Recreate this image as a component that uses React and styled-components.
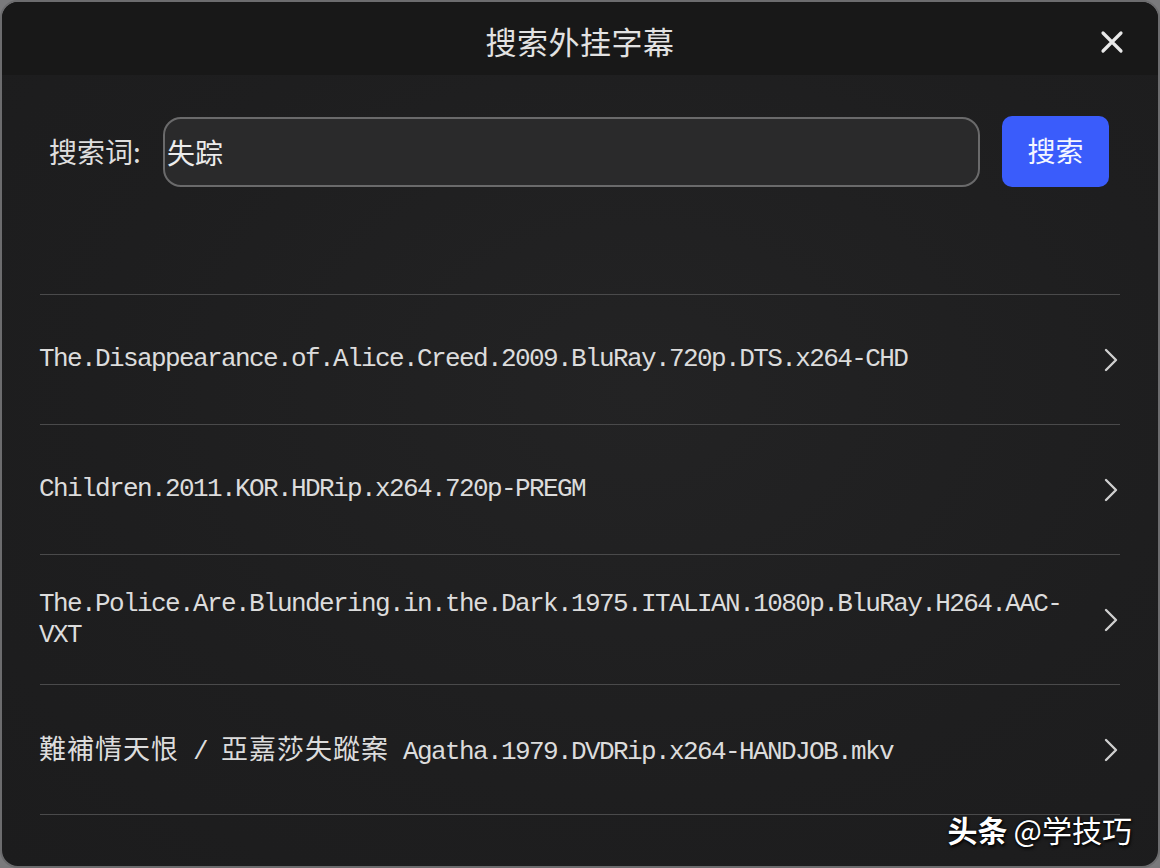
import React from "react";
import styled, { createGlobalStyle } from "styled-components";

const Global = createGlobalStyle`
  html, body { margin: 0; padding: 0; background: #7a7a7c; }
  body { font-family: "Noto Sans CJK SC", "Noto Sans", sans-serif; }
  * { box-sizing: border-box; }
`;

const Dialog = styled.div`
  position: relative;
  width: 1160px;
  height: 868px;
  border: 2px solid #6c6c6e;
  border-radius: 18px;
  overflow: hidden;
  background: radial-gradient(ellipse at 55% 45%, #232324 0%, #1e1e1f 60%, #1c1c1d 100%);
  display: flex;
  flex-direction: column;
`;

const Header = styled.div`
  height: 73px;
  flex: none;
  background: #181818;
  display: grid;
  grid-template-columns: 1fr auto 1fr;
  align-items: center;
  padding-right: 34px;
  padding-left: 34px;
`;

const Title = styled.div`
  grid-column: 2;
  font-size: 31px;
  color: #e2e2e2;
  letter-spacing: 0.5px;
  line-height: 1;
  padding-top: 4px;
`;

const CloseButton = styled.button`
  grid-column: 3;
  justify-self: end;
  background: none;
  border: none;
  padding: 0;
  width: 24px;
  height: 24px;
  display: flex;
  cursor: pointer;
  margin-top: 6px;
`;

const Body = styled.div`
  flex: 1;
  padding: 41px 38px 0 38px;
  display: flex;
  flex-direction: column;
`;

const SearchRow = styled.div`
  display: flex;
  align-items: center;
  padding: 0 11px 0 9px;
  height: 71px;
`;

const Label = styled.div`
  font-size: 28px;
  color: #dedede;
  width: 114px;
  flex: none;
  line-height: 1;
  padding-bottom: 2px;
`;

const InputBox = styled.div`
  flex: 1;
  height: 70px;
  border: 2px solid #6a6a6b;
  border-radius: 18px;
  background: #2a2a2b;
  display: flex;
  align-items: center;
  padding-left: 2px;
  font-size: 28px;
  color: #ececec;
  line-height: 1;
`;

const SearchButton = styled.button`
  margin-left: 22px;
  width: 107px;
  height: 71px;
  border: none;
  border-radius: 10px;
  background: #3a5cfb;
  color: #f4f6ff;
  font-family: "Noto Sans CJK SC", sans-serif;
  font-size: 28px;
  line-height: 1;
  padding: 0 0 4px;
  cursor: pointer;
`;

const List = styled.div`
  margin-top: 107px;
  border-bottom: 1.5px solid #4a4a4b;
`;

const Item = styled.div`
  height: 130px;
  border-top: 1.5px solid #4a4a4b;
  display: flex;
  align-items: center;
  gap: 24px;
`;

const ItemText = styled.div`
  flex: 1;
  font-family: "Liberation Mono", "Noto Sans CJK TC", monospace;
  font-size: 26px;
  letter-spacing: -1.6px;
  line-height: 31px;
  color: #dcdcdc;
  max-width: 1040px;
  margin-left: -1px;
`;

const Cjk = styled.span`
  font-family: "Noto Sans CJK TC", sans-serif;
  font-size: 27px;
  letter-spacing: 1px;
`;

const Chevron = styled.svg`
  flex: none;
  width: 16px;
  height: 26px;
  margin-right: -1px;
`;

const Watermark = styled.div`
  position: absolute;
  right: 26px;
  bottom: 22px;
  font-size: 30px;
  color: #ffffff;
  text-shadow: 0 0 2px #000, 1px 2px 3px rgba(0,0,0,0.9);
  line-height: 1;
  display: flex;
  gap: 6px;
  align-items: baseline;
`;

const Bold = styled.span`
  font-weight: 700;
`;

const ChevronIcon = () => (
  <Chevron viewBox="0 0 16 26">
    <path d="M3 3 L13 13 L3 23" fill="none" stroke="#cfcfcf" strokeWidth="2.4" strokeLinecap="round" strokeLinejoin="round" />
  </Chevron>
);

const items = [
  { text: "The.Disappearance.of.Alice.Creed.2009.BluRay.720p.DTS.x264-CHD" },
  { text: "Children.2011.KOR.HDRip.x264.720p-PREGM" },
  { text: "The.Police.Are.Blundering.in.the.Dark.1975.ITALIAN.1080p.BluRay.H264.AAC-VXT" },
  {
    parts: [
      { cjk: "難補情天恨" },
      { text: " / " },
      { cjk: "亞嘉莎失蹤案" },
      { text: " Agatha.1979.DVDRip.x264-HANDJOB.mkv" },
    ],
  },
];

export default function App() {
  return (
    <>
      <Global />
      <Dialog>
        <Header>
          <Title>搜索外挂字幕</Title>
          <CloseButton aria-label="close">
            <svg width="24" height="24" viewBox="0 0 24 24">
              <path d="M3 3 L21 21 M21 3 L3 21" stroke="#e8e8e8" strokeWidth="3.2" strokeLinecap="round" />
            </svg>
          </CloseButton>
        </Header>
        <Body>
          <SearchRow>
            <Label>搜索词:</Label>
            <InputBox>失踪</InputBox>
            <SearchButton>搜索</SearchButton>
          </SearchRow>
          <List>
            {items.map((it, i) => (
              <Item key={i}>
                <ItemText>
                  {it.parts
                    ? it.parts.map((p, j) =>
                        p.cjk ? <Cjk key={j}>{p.cjk}</Cjk> : <span key={j}>{p.text}</span>
                      )
                    : it.text}
                </ItemText>
                <ChevronIcon />
              </Item>
            ))}
          </List>
        </Body>
        <Watermark>
          <Bold>头条</Bold>
          <span>@学技巧</span>
        </Watermark>
      </Dialog>
    </>
  );
}
